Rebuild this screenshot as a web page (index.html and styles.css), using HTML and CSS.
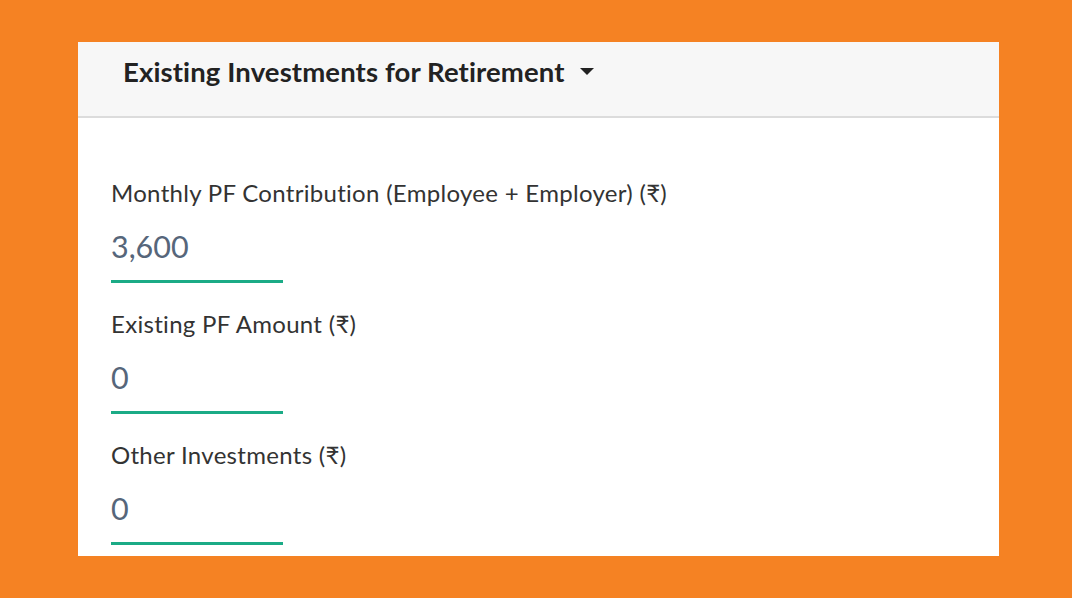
FILE: index.html
```html
<!DOCTYPE html>
<html lang="en">
<head>
    <meta charset="UTF-8">
    <meta name="viewport" content="width=device-width, initial-scale=1.0">
    <title>Existing Investments for Retirement</title>
    <link rel="stylesheet" href="styles.css">
</head>
<body>
    <div class="panel">
        <div class="panel-header">
            <span class="panel-title">Existing Investments for Retirement</span>
            <span class="caret"></span>
        </div>
        <div class="panel-body">
            <div class="field">
                <label for="monthly_pf">Monthly PF Contribution (Employee + Employer) (₹)</label>
                <input type="text" id="monthly_pf" value="3,600">
            </div>
            <div class="field">
                <label for="existing_pf">Existing PF Amount (₹)</label>
                <input type="text" id="existing_pf" value="0">
            </div>
            <div class="field">
                <label for="other_inv">Other Investments (₹)</label>
                <input type="text" id="other_inv" value="0">
            </div>
        </div>
    </div>
</body>
</html>
```

FILE: styles.css
```css
body {
    margin: 0;
    background-color: #f58223;
    font-family: Lato, "Open Sans", sans-serif;
    height: 598px;
    overflow: hidden;
}

.panel {
    margin: 42px 0 0 78px;
    width: 921px;
    height: 514px;
    background-color: #fff;
    overflow: hidden;
}

.panel-header {
    height: 74px;
    display: flex;
    align-items: center;
    padding-left: 45px;
    background-color: #f7f7f7;
    border-bottom: 2px solid #dcdcdc;
    box-sizing: content-box;
}

.panel-title {
    font-size: 27.5px;
    font-weight: 700;
    letter-spacing: 0.12px;
    color: #222;
    margin-top: -16px;
}

.caret {
    display: inline-block;
    margin-left: 15px;
    margin-top: -16px;
    width: 0;
    height: 0;
    border-left: 7px solid transparent;
    border-right: 7px solid transparent;
    border-top: 7px solid #222;
}

.panel-body {
    padding: 60px 33px 0;
}

.field {
    margin-bottom: 26px;
}

    .field label {
        display: block;
        font-size: 24px;
        letter-spacing: 0.3px;
        line-height: 30px;
        color: #333;
    }

    .field input {
        display: block;
        margin-top: 20px;
        width: 172px;
        box-sizing: border-box;
        height: 55px;
        padding: 0 0 16px;
        border: none;
        border-bottom: 3px solid #1bab86;
        font-family: Lato, "Open Sans", sans-serif;
        font-size: 30.5px;
        line-height: 36px;
        color: #56667a;
        background: transparent;
        outline: none;
    }
```
